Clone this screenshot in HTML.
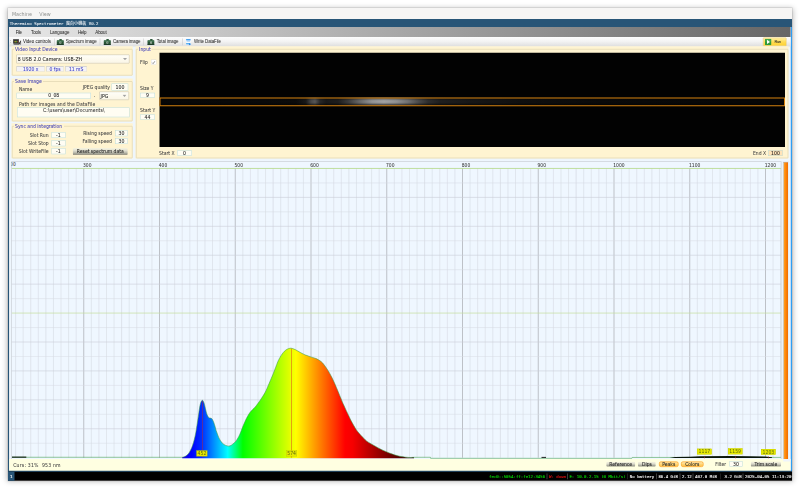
<!DOCTYPE html>
<html><head><meta charset="utf-8"><title>Theremino Spectrometer</title>
<style>
html,body{margin:0;padding:0;background:#fff;overflow:hidden;}
body{width:800px;height:489px;position:relative;overflow:hidden;}
body div,body svg.a{position:absolute;}
#root,#txt{left:0;top:0;width:3200px;height:1956px;transform:scale(0.25);transform-origin:0 0;overflow:hidden;}
#txt{will-change:opacity;}
.t{white-space:nowrap;line-height:1;-webkit-text-stroke:0.22px currentColor;}
.mono{-webkit-text-stroke:0.5px currentColor;}
.gtk{-webkit-text-stroke:0;}
.ui{font-family:"DejaVu Sans","Liberation Sans",sans-serif;}
.lib{font-family:"Liberation Sans","DejaVu Sans",sans-serif;-webkit-text-stroke:0.1px currentColor;}
.gtk{font-family:"DejaVu Sans","Liberation Sans",sans-serif;}
.mono{font-family:"DejaVu Sans Mono","Liberation Mono","Noto Sans CJK TC",monospace;}
.win{box-shadow:0 0 0 2.4px rgba(0,0,0,0.13),0 3px 22px 3px rgba(0,0,0,0.27);background:#f6f5f4;}
</style></head><body>
<div id="root">
<div class="win" style="left:32px;top:31.8px;width:3136px;height:1891.6px"></div>
<div style="left:32px;top:31.8px;width:3136px;height:44.2px;background:#f6f5f4;"></div>
<div style="left:32px;top:76px;width:3136px;height:32.4px;background:#285577;"></div>
<div style="left:32px;top:108.4px;width:5.2px;height:1776.4px;background:#285577;"></div>
<div style="left:3162.4px;top:108.4px;width:5.6px;height:1776.4px;background:#2e9ef4;"></div>
<div style="left:37.2px;top:108.4px;width:3125.2px;height:1776.4px;background:#eef6fd;"></div>
<div style="left:37.2px;top:108.4px;width:3125.2px;height:39.6px;background:linear-gradient(90deg,#e8e8e8 0%,#666666 100%);"></div>
<div style="left:37.2px;top:148px;width:3125.2px;height:38px;background:linear-gradient(180deg,#fdfdfd 0%,#f4f4f4 45%,#dedede 100%);"></div>
<svg class="a" style="left:51.6px;top:156px" width="33.6" height="23.6" viewBox="0 0 8.4 5.9"><rect x="0.2" y="0.3" width="5.6" height="4.3" fill="#262626"/><path d="M0.2 0.3 H5.8 V1.2 H0.2 Z" fill="#5a5a5a"/><rect x="1.5" y="1.9" width="1.3" height="1.5" fill="#b8a832"/><rect x="2.9" y="1.9" width="1.2" height="1.5" fill="#4c9a3c"/><rect x="4.2" y="1.9" width="0.9" height="1.5" fill="#a03a2a"/><path d="M5.2 5.0 L8.2 1.0 L8.2 5.4 Z" fill="#2e2e2e"/><path d="M6.6 4.9 L7.8 2.6 L7.8 4.9 Z" fill="#9a9a9a"/><rect x="0.6" y="4.7" width="5.6" height="0.9" fill="#3a3a3a"/></svg>
<div style="left:216px;top:154.4px;width:2px;height:26.4px;background:#c4c4c4;"></div>
<svg class="a" style="left:226.4px;top:156px" width="29.6" height="24" viewBox="0 0 7.4 6"><rect x="2.9" y="0.1" width="2.4" height="1.8" rx="0.3" fill="#2f5a3c"/><rect x="0.1" y="1.3" width="7.2" height="4.6" rx="0.6" fill="#2a5236"/><rect x="0.5" y="1.6" width="6.4" height="1.0" fill="#4d8a5f" opacity="0.85"/><rect x="2.9" y="2.6" width="1.9" height="1.9" fill="#c4d0c6"/><rect x="3.4" y="3.1" width="0.9" height="0.9" fill="#4a6a52"/><rect x="0.1" y="5.1" width="7.2" height="0.8" fill="#1c3826"/></svg>
<div style="left:399.2px;top:154.4px;width:2px;height:26.4px;background:#c4c4c4;"></div>
<svg class="a" style="left:414.4px;top:156px" width="29.6" height="24" viewBox="0 0 7.4 6"><rect x="2.9" y="0.1" width="2.4" height="1.8" rx="0.3" fill="#2f5a3c"/><rect x="0.1" y="1.3" width="7.2" height="4.6" rx="0.6" fill="#2a5236"/><rect x="0.5" y="1.6" width="6.4" height="1.0" fill="#4d8a5f" opacity="0.85"/><rect x="2.9" y="2.6" width="1.9" height="1.9" fill="#c4d0c6"/><rect x="3.4" y="3.1" width="0.9" height="0.9" fill="#4a6a52"/><rect x="0.1" y="5.1" width="7.2" height="0.8" fill="#1c3826"/></svg>
<div style="left:574.4px;top:154.4px;width:2px;height:26.4px;background:#c4c4c4;"></div>
<svg class="a" style="left:588.8px;top:156px" width="29.6" height="24" viewBox="0 0 7.4 6"><rect x="2.9" y="0.1" width="2.4" height="1.8" rx="0.3" fill="#2f5a3c"/><rect x="0.1" y="1.3" width="7.2" height="4.6" rx="0.6" fill="#2a5236"/><rect x="0.5" y="1.6" width="6.4" height="1.0" fill="#4d8a5f" opacity="0.85"/><rect x="2.9" y="2.6" width="1.9" height="1.9" fill="#c4d0c6"/><rect x="3.4" y="3.1" width="0.9" height="0.9" fill="#4a6a52"/><rect x="0.1" y="5.1" width="7.2" height="0.8" fill="#1c3826"/></svg>
<div style="left:730.4px;top:154.4px;width:2px;height:26.4px;background:#c4c4c4;"></div>
<svg class="a" style="left:743.2px;top:153.6px" width="23.2" height="28.8" viewBox="0 0 5.8 7.2"><rect x="0.6" y="0.9" width="4.2" height="5.6" fill="#f4f9ff"/><rect x="0.2" y="0.4" width="4.8" height="1.5" rx="0.7" fill="#4aa2ee"/><rect x="0.9" y="2.6" width="3.4" height="0.7" fill="#a8d2f6"/><rect x="0.2" y="4.4" width="4.0" height="1.6" rx="0.7" fill="#5ab0f2"/><path d="M3.2 4.6 L5.6 5.6 L3.2 6.9 Z" fill="#2a86e0"/></svg>
<div style="left:42.4px;top:155.2px;width:2px;height:24.8px;background:repeating-linear-gradient(180deg,#aaa 0 2.4px,transparent 2.4px 6.4px);"></div>
<div style="left:3052px;top:150px;width:93.6px;height:35.2px;background:linear-gradient(180deg,#fff0a8 0%,#ffdc55 50%,#ffd232 100%);border:2px solid #e8c24a;box-sizing:border-box;border-radius:3.2px;"></div>
<svg class="a" style="left:3060px;top:155.2px" width="25.6" height="25.6" viewBox="0 0 6.4 6.4"><rect x="0" y="0" width="6.4" height="6.4" rx="0.7" fill="#2f9a3a"/><rect x="0.5" y="0.5" width="5.4" height="2.4" fill="#57b860" opacity="0.6"/><path d="M2 1.1 L5 3.2 L2 5.3 Z" fill="#fff"/></svg>
<div style="left:45.6px;top:185.2px;width:485.6px;height:117.6px;background:#fff4d1;"></div>
<div style="left:47.6px;top:196px;width:482.4px;height:105.6px;border:2.2px solid #d2c8a2;box-sizing:border-box;border-radius:2.8px"></div>
<div style="left:56.4px;top:189.2px;width:180.4px;height:14.4px;background:#fff4d1;"></div>
<div style="left:45.6px;top:314px;width:485.6px;height:172.4px;background:#fff4d1;"></div>
<div style="left:47.6px;top:324.8px;width:482.4px;height:160.4px;border:2.2px solid #d2c8a2;box-sizing:border-box;border-radius:2.8px"></div>
<div style="left:56.4px;top:318px;width:116px;height:14.4px;background:#fff4d1;"></div>
<div style="left:45.6px;top:493.2px;width:485.6px;height:141.2px;background:#fff4d1;"></div>
<div style="left:47.6px;top:504px;width:482.4px;height:129.2px;border:2.2px solid #d2c8a2;box-sizing:border-box;border-radius:2.8px"></div>
<div style="left:56.4px;top:497.2px;width:200px;height:14.4px;background:#fff4d1;"></div>
<div style="left:542px;top:185.2px;width:2612.4px;height:449.2px;background:#fff4d1;"></div>
<div style="left:544px;top:196px;width:2609.2px;height:437.2px;border:2.2px solid #d2c8a2;box-sizing:border-box;border-radius:2.8px"></div>
<div style="left:552.4px;top:189.2px;width:53.6px;height:14.4px;background:#fff4d1;"></div>
<div style="left:65.2px;top:218.4px;width:453.2px;height:35.2px;background:linear-gradient(180deg,#fffef8,#fbf6e6);border:2px solid #c2bfb2;box-sizing:border-box;border-radius:2.4px;"></div>
<svg class="a" style="left:492px;top:231.2px" width="16" height="9.6" viewBox="0 0 4 2.4"><path d="M0 0.2 L4 0.2 L2 2.4 Z" fill="#a2a2a2"/></svg>
<div style="left:66.4px;top:264px;width:112.8px;height:22.4px;background:#f4f3f6;border:2px solid #e6e0cc;border-top-color:#b9b6ae;border-left-color:#c9c6be;box-sizing:border-box;"></div>
<div style="left:185.2px;top:264px;width:70px;height:22.4px;background:#f4f3f6;border:2px solid #e6e0cc;border-top-color:#b9b6ae;border-left-color:#c9c6be;box-sizing:border-box;"></div>
<div style="left:261.2px;top:264px;width:86.8px;height:22.4px;background:#f4f3f6;border:2px solid #e6e0cc;border-top-color:#b9b6ae;border-left-color:#c9c6be;box-sizing:border-box;"></div>
<div style="left:446.4px;top:333.6px;width:66.8px;height:28.8px;background:#fffdf3;border:2px solid #bddcd6;box-sizing:border-box;"></div>
<div style="left:66px;top:370.8px;width:298px;height:24px;background:#fffdf3;border:2px solid #bddcd6;box-sizing:border-box;"></div>
<div style="left:396.8px;top:366px;width:119.2px;height:34px;background:linear-gradient(180deg,#fffef8,#fbf6e6);border:2px solid #c2bfb2;box-sizing:border-box;border-radius:2.4px;"></div>
<svg class="a" style="left:489.6px;top:378.2px" width="16" height="9.6" viewBox="0 0 4 2.4"><path d="M0 0.2 L4 0.2 L2 2.4 Z" fill="#a2a2a2"/></svg>
<div style="left:68.4px;top:430.4px;width:449.6px;height:38.8px;background:#fffdf3;border:2px solid #bddcd6;box-sizing:border-box;"></div>
<div style="left:205.6px;top:527.8px;width:56px;height:23.8px;background:#fffdf3;border:2px solid #bddcd6;box-sizing:border-box;"></div>
<div style="left:205.6px;top:561.4px;width:56px;height:23.8px;background:#fffdf3;border:2px solid #bddcd6;box-sizing:border-box;"></div>
<div style="left:205.6px;top:593.4px;width:56px;height:23.8px;background:#fffdf3;border:2px solid #bddcd6;box-sizing:border-box;"></div>
<div style="left:460.8px;top:521.2px;width:50px;height:23.6px;background:#fffdf3;border:2px solid #bddcd6;box-sizing:border-box;"></div>
<div style="left:460.8px;top:552.8px;width:50px;height:23.6px;background:#fffdf3;border:2px solid #bddcd6;box-sizing:border-box;"></div>
<div style="left:291.2px;top:592.4px;width:220px;height:27.2px;background:linear-gradient(180deg,#f6f4e0 0%,#e0dfd0 40%,#b4b4a6 78%,#85857a 100%);border-radius:5.2px;border-bottom:2px solid #6f6f66;box-sizing:border-box;"></div>
<div style="left:603.6px;top:239px;width:21.2px;height:20.2px;background:#ffffff;border:1.8px solid #c4c4c4;box-sizing:border-box;"></div>
<svg class="a" style="left:606.4px;top:241.6px" width="16" height="16" viewBox="0 0 4 4"><path d="M0.6 2.1 L1.6 3.1 L3.5 0.7" fill="none" stroke="#4a4a4a" stroke-width="0.6"/></svg>
<div style="left:560.4px;top:370.8px;width:59.2px;height:18.8px;background:#fffdf3;border:2px solid #bddcd6;box-sizing:border-box;"></div>
<div style="left:560.4px;top:458px;width:59.2px;height:20px;background:#fffdf3;border:2px solid #bddcd6;box-sizing:border-box;"></div>
<div style="left:708.4px;top:602px;width:59.2px;height:21.2px;background:#fffdf3;border:2px solid #bddcd6;box-sizing:border-box;"></div>
<div style="left:3073.2px;top:600.4px;width:57.6px;height:24px;background:#ffe3b8;border:2px solid #bddcd6;box-sizing:border-box;"></div>
<div style="left:638px;top:211px;width:2502.4px;height:376.6px;background:#020202;overflow:hidden;"><div style="left:0;top:179.4px;width:2502.4px;height:31.2px;background:linear-gradient(180deg,rgba(0,0,0,0.75) 0%,rgba(0,0,0,0.12) 30%,rgba(0,0,0,0) 50%,rgba(0,0,0,0.12) 70%,rgba(0,0,0,0.75) 100%),linear-gradient(90deg,#070707 0.00%,#0b0b0b 21.82%,#1a1a1a 23.42%,#4a4a4a 24.22%,#5a5a5a 24.86%,#2a2a2a 25.66%,#1a1a1a 26.61%,#1e1e1e 28.53%,#3c3c3c 30.13%,#6e6e6e 32.05%,#999a9b 33.97%,#a8a9aa 35.89%,#98999a 37.80%,#777 39.72%,#505050 41.32%,#303030 42.92%,#202020 44.84%,#181818 49.63%,#101010 57.62%,#0a0a0a 70.41%,#060606 99.98%)"></div></div>
<div style="left:638px;top:389.6px;width:2502.4px;height:35px;border:4.2px solid #d5820f;box-sizing:border-box;"></div>
<svg class="a" style="left:0;top:0" width="3200" height="1956" viewBox="0 0 800 489"><defs><linearGradient id="sp" gradientUnits="userSpaceOnUse" x1="0" y1="0" x2="800" y2="0"><stop offset="0.19937" stop-color="#1a0060"/><stop offset="0.21831" stop-color="#2a00a8"/><stop offset="0.23346" stop-color="#0a00f0"/><stop offset="0.23914" stop-color="#0000ff"/><stop offset="0.25240" stop-color="#0030ff"/><stop offset="0.28459" stop-color="#00ffff"/><stop offset="0.30353" stop-color="#00ff00"/><stop offset="0.33667" stop-color="#80ff00"/><stop offset="0.36981" stop-color="#ffff00"/><stop offset="0.40011" stop-color="#ff8000"/><stop offset="0.43136" stop-color="#ff0000"/><stop offset="0.44083" stop-color="#f60000"/><stop offset="0.48344" stop-color="#7c0000"/><stop offset="0.51184" stop-color="#340000"/><stop offset="0.53078" stop-color="#080000"/></linearGradient><clipPath id="cc"><rect x="11.5" y="161.0" width="769.7" height="298.1"/></clipPath></defs><rect x="11.5" y="161.0" width="769.7" height="298.1" fill="#eff7ff"/><g clip-path="url(#cc)"><line x1="15.58" y1="168.45" x2="15.58" y2="457.7" stroke="#d0d5dd" stroke-width="0.5"/><line x1="23.15" y1="168.45" x2="23.15" y2="457.7" stroke="#d0d5dd" stroke-width="0.5"/><line x1="30.72" y1="168.45" x2="30.72" y2="457.7" stroke="#d0d5dd" stroke-width="0.5"/><line x1="38.30" y1="168.45" x2="38.30" y2="457.7" stroke="#d0d5dd" stroke-width="0.5"/><line x1="45.88" y1="168.45" x2="45.88" y2="457.7" stroke="#cdd2da" stroke-width="0.55"/><line x1="53.45" y1="168.45" x2="53.45" y2="457.7" stroke="#d0d5dd" stroke-width="0.5"/><line x1="61.03" y1="168.45" x2="61.03" y2="457.7" stroke="#d0d5dd" stroke-width="0.5"/><line x1="68.60" y1="168.45" x2="68.60" y2="457.7" stroke="#d0d5dd" stroke-width="0.5"/><line x1="76.18" y1="168.45" x2="76.18" y2="457.7" stroke="#d0d5dd" stroke-width="0.5"/><line x1="83.75" y1="168.45" x2="83.75" y2="457.7" stroke="#8e8e92" stroke-width="0.52"/><line x1="91.33" y1="168.45" x2="91.33" y2="457.7" stroke="#d0d5dd" stroke-width="0.5"/><line x1="98.90" y1="168.45" x2="98.90" y2="457.7" stroke="#d0d5dd" stroke-width="0.5"/><line x1="106.47" y1="168.45" x2="106.47" y2="457.7" stroke="#d0d5dd" stroke-width="0.5"/><line x1="114.05" y1="168.45" x2="114.05" y2="457.7" stroke="#d0d5dd" stroke-width="0.5"/><line x1="121.62" y1="168.45" x2="121.62" y2="457.7" stroke="#cdd2da" stroke-width="0.55"/><line x1="129.20" y1="168.45" x2="129.20" y2="457.7" stroke="#d0d5dd" stroke-width="0.5"/><line x1="136.78" y1="168.45" x2="136.78" y2="457.7" stroke="#d0d5dd" stroke-width="0.5"/><line x1="144.35" y1="168.45" x2="144.35" y2="457.7" stroke="#d0d5dd" stroke-width="0.5"/><line x1="151.93" y1="168.45" x2="151.93" y2="457.7" stroke="#d0d5dd" stroke-width="0.5"/><line x1="159.50" y1="168.45" x2="159.50" y2="457.7" stroke="#8e8e92" stroke-width="0.52"/><line x1="167.07" y1="168.45" x2="167.07" y2="457.7" stroke="#d0d5dd" stroke-width="0.5"/><line x1="174.65" y1="168.45" x2="174.65" y2="457.7" stroke="#d0d5dd" stroke-width="0.5"/><line x1="182.22" y1="168.45" x2="182.22" y2="457.7" stroke="#d0d5dd" stroke-width="0.5"/><line x1="189.80" y1="168.45" x2="189.80" y2="457.7" stroke="#d0d5dd" stroke-width="0.5"/><line x1="197.38" y1="168.45" x2="197.38" y2="457.7" stroke="#cdd2da" stroke-width="0.55"/><line x1="204.95" y1="168.45" x2="204.95" y2="457.7" stroke="#d0d5dd" stroke-width="0.5"/><line x1="212.53" y1="168.45" x2="212.53" y2="457.7" stroke="#d0d5dd" stroke-width="0.5"/><line x1="220.10" y1="168.45" x2="220.10" y2="457.7" stroke="#d0d5dd" stroke-width="0.5"/><line x1="227.68" y1="168.45" x2="227.68" y2="457.7" stroke="#d0d5dd" stroke-width="0.5"/><line x1="235.25" y1="168.45" x2="235.25" y2="457.7" stroke="#8e8e92" stroke-width="0.52"/><line x1="242.82" y1="168.45" x2="242.82" y2="457.7" stroke="#d0d5dd" stroke-width="0.5"/><line x1="250.40" y1="168.45" x2="250.40" y2="457.7" stroke="#d0d5dd" stroke-width="0.5"/><line x1="257.98" y1="168.45" x2="257.98" y2="457.7" stroke="#d0d5dd" stroke-width="0.5"/><line x1="265.55" y1="168.45" x2="265.55" y2="457.7" stroke="#d0d5dd" stroke-width="0.5"/><line x1="273.12" y1="168.45" x2="273.12" y2="457.7" stroke="#cdd2da" stroke-width="0.55"/><line x1="280.70" y1="168.45" x2="280.70" y2="457.7" stroke="#d0d5dd" stroke-width="0.5"/><line x1="288.27" y1="168.45" x2="288.27" y2="457.7" stroke="#d0d5dd" stroke-width="0.5"/><line x1="295.85" y1="168.45" x2="295.85" y2="457.7" stroke="#d0d5dd" stroke-width="0.5"/><line x1="303.42" y1="168.45" x2="303.42" y2="457.7" stroke="#d0d5dd" stroke-width="0.5"/><line x1="311.00" y1="168.45" x2="311.00" y2="457.7" stroke="#8e8e92" stroke-width="0.52"/><line x1="318.57" y1="168.45" x2="318.57" y2="457.7" stroke="#d0d5dd" stroke-width="0.5"/><line x1="326.15" y1="168.45" x2="326.15" y2="457.7" stroke="#d0d5dd" stroke-width="0.5"/><line x1="333.73" y1="168.45" x2="333.73" y2="457.7" stroke="#d0d5dd" stroke-width="0.5"/><line x1="341.30" y1="168.45" x2="341.30" y2="457.7" stroke="#d0d5dd" stroke-width="0.5"/><line x1="348.88" y1="168.45" x2="348.88" y2="457.7" stroke="#cdd2da" stroke-width="0.55"/><line x1="356.45" y1="168.45" x2="356.45" y2="457.7" stroke="#d0d5dd" stroke-width="0.5"/><line x1="364.02" y1="168.45" x2="364.02" y2="457.7" stroke="#d0d5dd" stroke-width="0.5"/><line x1="371.60" y1="168.45" x2="371.60" y2="457.7" stroke="#d0d5dd" stroke-width="0.5"/><line x1="379.17" y1="168.45" x2="379.17" y2="457.7" stroke="#d0d5dd" stroke-width="0.5"/><line x1="386.75" y1="168.45" x2="386.75" y2="457.7" stroke="#8e8e92" stroke-width="0.52"/><line x1="394.32" y1="168.45" x2="394.32" y2="457.7" stroke="#d0d5dd" stroke-width="0.5"/><line x1="401.90" y1="168.45" x2="401.90" y2="457.7" stroke="#d0d5dd" stroke-width="0.5"/><line x1="409.48" y1="168.45" x2="409.48" y2="457.7" stroke="#d0d5dd" stroke-width="0.5"/><line x1="417.05" y1="168.45" x2="417.05" y2="457.7" stroke="#d0d5dd" stroke-width="0.5"/><line x1="424.62" y1="168.45" x2="424.62" y2="457.7" stroke="#cdd2da" stroke-width="0.55"/><line x1="432.20" y1="168.45" x2="432.20" y2="457.7" stroke="#d0d5dd" stroke-width="0.5"/><line x1="439.77" y1="168.45" x2="439.77" y2="457.7" stroke="#d0d5dd" stroke-width="0.5"/><line x1="447.35" y1="168.45" x2="447.35" y2="457.7" stroke="#d0d5dd" stroke-width="0.5"/><line x1="454.92" y1="168.45" x2="454.92" y2="457.7" stroke="#d0d5dd" stroke-width="0.5"/><line x1="462.50" y1="168.45" x2="462.50" y2="457.7" stroke="#8e8e92" stroke-width="0.52"/><line x1="470.07" y1="168.45" x2="470.07" y2="457.7" stroke="#d0d5dd" stroke-width="0.5"/><line x1="477.65" y1="168.45" x2="477.65" y2="457.7" stroke="#d0d5dd" stroke-width="0.5"/><line x1="485.22" y1="168.45" x2="485.22" y2="457.7" stroke="#d0d5dd" stroke-width="0.5"/><line x1="492.80" y1="168.45" x2="492.80" y2="457.7" stroke="#d0d5dd" stroke-width="0.5"/><line x1="500.38" y1="168.45" x2="500.38" y2="457.7" stroke="#cdd2da" stroke-width="0.55"/><line x1="507.95" y1="168.45" x2="507.95" y2="457.7" stroke="#d0d5dd" stroke-width="0.5"/><line x1="515.52" y1="168.45" x2="515.52" y2="457.7" stroke="#d0d5dd" stroke-width="0.5"/><line x1="523.10" y1="168.45" x2="523.10" y2="457.7" stroke="#d0d5dd" stroke-width="0.5"/><line x1="530.67" y1="168.45" x2="530.67" y2="457.7" stroke="#d0d5dd" stroke-width="0.5"/><line x1="538.25" y1="168.45" x2="538.25" y2="457.7" stroke="#8e8e92" stroke-width="0.52"/><line x1="545.83" y1="168.45" x2="545.83" y2="457.7" stroke="#d0d5dd" stroke-width="0.5"/><line x1="553.40" y1="168.45" x2="553.40" y2="457.7" stroke="#d0d5dd" stroke-width="0.5"/><line x1="560.97" y1="168.45" x2="560.97" y2="457.7" stroke="#d0d5dd" stroke-width="0.5"/><line x1="568.55" y1="168.45" x2="568.55" y2="457.7" stroke="#d0d5dd" stroke-width="0.5"/><line x1="576.12" y1="168.45" x2="576.12" y2="457.7" stroke="#cdd2da" stroke-width="0.55"/><line x1="583.70" y1="168.45" x2="583.70" y2="457.7" stroke="#d0d5dd" stroke-width="0.5"/><line x1="591.27" y1="168.45" x2="591.27" y2="457.7" stroke="#d0d5dd" stroke-width="0.5"/><line x1="598.85" y1="168.45" x2="598.85" y2="457.7" stroke="#d0d5dd" stroke-width="0.5"/><line x1="606.42" y1="168.45" x2="606.42" y2="457.7" stroke="#d0d5dd" stroke-width="0.5"/><line x1="614.00" y1="168.45" x2="614.00" y2="457.7" stroke="#8e8e92" stroke-width="0.52"/><line x1="621.58" y1="168.45" x2="621.58" y2="457.7" stroke="#d0d5dd" stroke-width="0.5"/><line x1="629.15" y1="168.45" x2="629.15" y2="457.7" stroke="#d0d5dd" stroke-width="0.5"/><line x1="636.72" y1="168.45" x2="636.72" y2="457.7" stroke="#d0d5dd" stroke-width="0.5"/><line x1="644.30" y1="168.45" x2="644.30" y2="457.7" stroke="#d0d5dd" stroke-width="0.5"/><line x1="651.88" y1="168.45" x2="651.88" y2="457.7" stroke="#cdd2da" stroke-width="0.55"/><line x1="659.45" y1="168.45" x2="659.45" y2="457.7" stroke="#d0d5dd" stroke-width="0.5"/><line x1="667.02" y1="168.45" x2="667.02" y2="457.7" stroke="#d0d5dd" stroke-width="0.5"/><line x1="674.60" y1="168.45" x2="674.60" y2="457.7" stroke="#d0d5dd" stroke-width="0.5"/><line x1="682.17" y1="168.45" x2="682.17" y2="457.7" stroke="#d0d5dd" stroke-width="0.5"/><line x1="689.75" y1="168.45" x2="689.75" y2="457.7" stroke="#8e8e92" stroke-width="0.52"/><line x1="697.32" y1="168.45" x2="697.32" y2="457.7" stroke="#d0d5dd" stroke-width="0.5"/><line x1="704.90" y1="168.45" x2="704.90" y2="457.7" stroke="#d0d5dd" stroke-width="0.5"/><line x1="712.47" y1="168.45" x2="712.47" y2="457.7" stroke="#d0d5dd" stroke-width="0.5"/><line x1="720.05" y1="168.45" x2="720.05" y2="457.7" stroke="#d0d5dd" stroke-width="0.5"/><line x1="727.62" y1="168.45" x2="727.62" y2="457.7" stroke="#cdd2da" stroke-width="0.55"/><line x1="735.20" y1="168.45" x2="735.20" y2="457.7" stroke="#d0d5dd" stroke-width="0.5"/><line x1="742.77" y1="168.45" x2="742.77" y2="457.7" stroke="#d0d5dd" stroke-width="0.5"/><line x1="750.35" y1="168.45" x2="750.35" y2="457.7" stroke="#d0d5dd" stroke-width="0.5"/><line x1="757.92" y1="168.45" x2="757.92" y2="457.7" stroke="#d0d5dd" stroke-width="0.5"/><line x1="765.50" y1="168.45" x2="765.50" y2="457.7" stroke="#8e8e92" stroke-width="0.52"/><line x1="773.07" y1="168.45" x2="773.07" y2="457.7" stroke="#d0d5dd" stroke-width="0.5"/><line x1="780.65" y1="168.45" x2="780.65" y2="457.7" stroke="#d0d5dd" stroke-width="0.5"/><line x1="11.5" y1="182.91" x2="781.2" y2="182.91" stroke="#d6dbe2" stroke-width="0.5"/><line x1="11.5" y1="197.38" x2="781.2" y2="197.38" stroke="#c9cdd6" stroke-width="0.6"/><line x1="11.5" y1="211.84" x2="781.2" y2="211.84" stroke="#d6dbe2" stroke-width="0.5"/><line x1="11.5" y1="226.30" x2="781.2" y2="226.30" stroke="#c9cdd6" stroke-width="0.6"/><line x1="11.5" y1="240.76" x2="781.2" y2="240.76" stroke="#d6dbe2" stroke-width="0.5"/><line x1="11.5" y1="255.22" x2="781.2" y2="255.22" stroke="#c9cdd6" stroke-width="0.6"/><line x1="11.5" y1="269.69" x2="781.2" y2="269.69" stroke="#d6dbe2" stroke-width="0.5"/><line x1="11.5" y1="284.15" x2="781.2" y2="284.15" stroke="#c9cdd6" stroke-width="0.6"/><line x1="11.5" y1="298.61" x2="781.2" y2="298.61" stroke="#d6dbe2" stroke-width="0.5"/><line x1="11.5" y1="313.07" x2="781.2" y2="313.07" stroke="#c3dd9c" stroke-width="0.7"/><line x1="11.5" y1="327.54" x2="781.2" y2="327.54" stroke="#d6dbe2" stroke-width="0.5"/><line x1="11.5" y1="342.00" x2="781.2" y2="342.00" stroke="#c9cdd6" stroke-width="0.6"/><line x1="11.5" y1="356.46" x2="781.2" y2="356.46" stroke="#d6dbe2" stroke-width="0.5"/><line x1="11.5" y1="370.92" x2="781.2" y2="370.92" stroke="#c9cdd6" stroke-width="0.6"/><line x1="11.5" y1="385.39" x2="781.2" y2="385.39" stroke="#d6dbe2" stroke-width="0.5"/><line x1="11.5" y1="399.85" x2="781.2" y2="399.85" stroke="#c9cdd6" stroke-width="0.6"/><line x1="11.5" y1="414.31" x2="781.2" y2="414.31" stroke="#d6dbe2" stroke-width="0.5"/><line x1="11.5" y1="428.77" x2="781.2" y2="428.77" stroke="#c9cdd6" stroke-width="0.6"/><line x1="11.5" y1="443.24" x2="781.2" y2="443.24" stroke="#d6dbe2" stroke-width="0.5"/><line x1="11.5" y1="168.45" x2="781.2" y2="168.45" stroke="#b4d987" stroke-width="0.8"/><path d="M182.2 458.3 L182.2 457.3 C182.6 457.2 183.9 457.0 184.8 456.6 C185.7 456.2 186.6 455.6 187.4 454.8 C188.2 454.0 188.9 453.2 189.6 452.0 C190.3 450.8 191.0 449.4 191.7 447.8 C192.3 446.2 192.9 444.5 193.5 442.5 C194.1 440.5 194.7 438.0 195.2 435.7 C195.7 433.4 196.1 431.1 196.5 428.5 C196.9 425.9 197.4 422.7 197.8 420.0 C198.2 417.3 198.6 414.8 198.9 412.5 C199.2 410.2 199.6 407.9 199.9 406.1 C200.2 404.4 200.6 403.0 201.0 402.0 C201.4 401.0 201.9 400.4 202.3 400.3 C202.7 400.2 203.1 400.9 203.4 401.6 C203.8 402.3 204.1 403.2 204.4 404.3 C204.7 405.4 205.1 407.1 205.4 408.5 C205.8 409.9 206.1 411.8 206.5 413.0 C206.9 414.2 207.3 415.2 207.7 416.0 C208.1 416.8 208.6 417.5 209.1 417.9 C209.6 418.2 210.0 418.0 210.4 418.1 C210.8 418.2 211.3 418.2 211.7 418.6 C212.1 419.0 212.5 419.5 212.8 420.2 C213.2 420.9 213.4 421.6 213.8 422.6 C214.2 423.6 214.6 425.0 215.0 426.3 C215.4 427.6 215.7 429.1 216.1 430.4 C216.5 431.7 217.0 432.8 217.4 434.0 C217.8 435.2 218.2 436.3 218.7 437.4 C219.2 438.5 219.8 439.6 220.4 440.5 C221.0 441.4 221.6 442.4 222.2 443.0 C222.8 443.6 223.3 444.0 223.9 444.4 C224.5 444.8 225.1 445.1 225.7 445.4 C226.3 445.6 226.8 445.8 227.4 445.9 C228.0 446.0 228.5 446.2 229.1 446.1 C229.7 446.0 230.3 445.8 230.9 445.5 C231.5 445.2 232.0 444.8 232.6 444.3 C233.2 443.9 233.8 443.4 234.4 442.8 C235.0 442.2 235.5 441.7 236.1 440.9 C236.7 440.1 237.3 439.1 237.9 438.1 C238.5 437.1 239.0 436.1 239.6 434.8 C240.2 433.6 240.7 432.1 241.3 430.6 C241.9 429.2 242.4 427.5 243.0 426.1 C243.6 424.7 244.2 423.3 244.8 422.0 C245.4 420.7 245.9 419.4 246.5 418.3 C247.1 417.2 247.6 416.2 248.2 415.2 C248.8 414.2 249.3 413.3 250.0 412.4 C250.7 411.5 251.7 410.5 252.6 409.6 C253.5 408.7 254.3 408.0 255.2 407.0 C256.1 406.0 256.9 404.8 257.8 403.6 C258.7 402.4 259.6 401.2 260.4 400.0 C261.2 398.8 261.9 397.8 262.6 396.6 C263.3 395.4 264.1 394.4 264.8 393.0 C265.5 391.6 266.3 390.0 267.0 388.4 C267.7 386.8 268.4 385.2 269.1 383.5 C269.8 381.8 270.6 380.1 271.3 378.3 C272.0 376.6 272.8 374.8 273.5 373.0 C274.2 371.2 275.0 369.2 275.7 367.3 C276.4 365.4 277.1 363.4 277.8 361.7 C278.5 360.0 279.3 358.7 280.0 357.4 C280.7 356.1 281.5 354.9 282.2 353.9 C282.9 352.9 283.7 352.0 284.4 351.3 C285.1 350.6 285.8 350.1 286.5 349.6 C287.2 349.2 288.0 348.8 288.7 348.6 C289.4 348.4 290.2 348.2 290.9 348.2 C291.6 348.2 292.3 348.5 293.0 348.7 C293.7 348.9 294.4 349.2 295.2 349.6 C296.0 350.0 296.9 350.5 297.8 351.0 C298.7 351.5 299.5 352.0 300.4 352.5 C301.3 353.0 302.1 353.5 303.0 353.9 C303.9 354.3 304.8 354.8 305.7 355.1 C306.6 355.5 307.4 355.7 308.3 356.0 C309.2 356.3 310.0 356.6 310.9 356.9 C311.8 357.2 312.6 357.4 313.5 357.7 C314.4 358.0 315.2 358.2 316.1 358.6 C317.0 359.0 317.8 359.4 318.7 359.9 C319.6 360.4 320.5 361.0 321.3 361.7 C322.1 362.4 322.8 363.1 323.5 364.0 C324.2 364.9 325.0 366.0 325.7 367.0 C326.4 368.0 327.1 369.1 327.8 370.2 C328.5 371.3 329.3 372.6 330.0 373.9 C330.7 375.2 331.5 376.7 332.2 378.1 C332.9 379.6 333.6 381.0 334.3 382.6 C335.0 384.2 335.8 386.0 336.5 387.7 C337.2 389.4 338.0 391.2 338.7 393.0 C339.4 394.8 340.2 396.6 340.9 398.3 C341.6 400.1 342.3 401.9 343.0 403.5 C343.7 405.1 344.5 406.6 345.2 408.2 C345.9 409.8 346.7 411.5 347.4 412.9 C348.1 414.3 348.6 415.5 349.2 416.7 C349.8 417.9 350.2 418.9 350.9 420.3 C351.6 421.7 352.6 423.6 353.5 425.1 C354.4 426.6 355.2 428.1 356.1 429.4 C357.0 430.7 357.8 431.8 358.7 432.8 C359.6 433.9 360.4 434.8 361.3 435.7 C362.2 436.6 363.0 437.5 363.9 438.4 C364.8 439.3 365.5 440.1 366.5 440.9 C367.5 441.7 368.8 442.5 370.0 443.2 C371.2 443.9 372.3 444.5 373.5 445.2 C374.7 445.9 375.9 446.6 377.0 447.2 C378.1 447.8 379.2 448.4 380.4 449.0 C381.5 449.6 382.7 450.2 383.9 450.7 C385.1 451.2 386.2 451.7 387.4 452.2 C388.6 452.7 389.8 453.2 390.9 453.6 C392.0 454.0 393.1 454.4 394.3 454.8 C395.5 455.2 396.6 455.5 397.8 455.8 C399.0 456.1 400.0 456.3 401.3 456.5 C402.6 456.7 404.2 457.0 405.7 457.2 C407.1 457.4 408.6 457.5 410.0 457.5 C411.4 457.5 413.3 457.3 414.0 457.3 L414 458.3 Z" fill="url(#sp)"/><path d="M11.5 457.25 L182.2 457.3 182.2 457.3 C182.6 457.2 183.9 457.0 184.8 456.6 C185.7 456.2 186.6 455.6 187.4 454.8 C188.2 454.0 188.9 453.2 189.6 452.0 C190.3 450.8 191.0 449.4 191.7 447.8 C192.3 446.2 192.9 444.5 193.5 442.5 C194.1 440.5 194.7 438.0 195.2 435.7 C195.7 433.4 196.1 431.1 196.5 428.5 C196.9 425.9 197.4 422.7 197.8 420.0 C198.2 417.3 198.6 414.8 198.9 412.5 C199.2 410.2 199.6 407.9 199.9 406.1 C200.2 404.4 200.6 403.0 201.0 402.0 C201.4 401.0 201.9 400.4 202.3 400.3 C202.7 400.2 203.1 400.9 203.4 401.6 C203.8 402.3 204.1 403.2 204.4 404.3 C204.7 405.4 205.1 407.1 205.4 408.5 C205.8 409.9 206.1 411.8 206.5 413.0 C206.9 414.2 207.3 415.2 207.7 416.0 C208.1 416.8 208.6 417.5 209.1 417.9 C209.6 418.2 210.0 418.0 210.4 418.1 C210.8 418.2 211.3 418.2 211.7 418.6 C212.1 419.0 212.5 419.5 212.8 420.2 C213.2 420.9 213.4 421.6 213.8 422.6 C214.2 423.6 214.6 425.0 215.0 426.3 C215.4 427.6 215.7 429.1 216.1 430.4 C216.5 431.7 217.0 432.8 217.4 434.0 C217.8 435.2 218.2 436.3 218.7 437.4 C219.2 438.5 219.8 439.6 220.4 440.5 C221.0 441.4 221.6 442.4 222.2 443.0 C222.8 443.6 223.3 444.0 223.9 444.4 C224.5 444.8 225.1 445.1 225.7 445.4 C226.3 445.6 226.8 445.8 227.4 445.9 C228.0 446.0 228.5 446.2 229.1 446.1 C229.7 446.0 230.3 445.8 230.9 445.5 C231.5 445.2 232.0 444.8 232.6 444.3 C233.2 443.9 233.8 443.4 234.4 442.8 C235.0 442.2 235.5 441.7 236.1 440.9 C236.7 440.1 237.3 439.1 237.9 438.1 C238.5 437.1 239.0 436.1 239.6 434.8 C240.2 433.6 240.7 432.1 241.3 430.6 C241.9 429.2 242.4 427.5 243.0 426.1 C243.6 424.7 244.2 423.3 244.8 422.0 C245.4 420.7 245.9 419.4 246.5 418.3 C247.1 417.2 247.6 416.2 248.2 415.2 C248.8 414.2 249.3 413.3 250.0 412.4 C250.7 411.5 251.7 410.5 252.6 409.6 C253.5 408.7 254.3 408.0 255.2 407.0 C256.1 406.0 256.9 404.8 257.8 403.6 C258.7 402.4 259.6 401.2 260.4 400.0 C261.2 398.8 261.9 397.8 262.6 396.6 C263.3 395.4 264.1 394.4 264.8 393.0 C265.5 391.6 266.3 390.0 267.0 388.4 C267.7 386.8 268.4 385.2 269.1 383.5 C269.8 381.8 270.6 380.1 271.3 378.3 C272.0 376.6 272.8 374.8 273.5 373.0 C274.2 371.2 275.0 369.2 275.7 367.3 C276.4 365.4 277.1 363.4 277.8 361.7 C278.5 360.0 279.3 358.7 280.0 357.4 C280.7 356.1 281.5 354.9 282.2 353.9 C282.9 352.9 283.7 352.0 284.4 351.3 C285.1 350.6 285.8 350.1 286.5 349.6 C287.2 349.2 288.0 348.8 288.7 348.6 C289.4 348.4 290.2 348.2 290.9 348.2 C291.6 348.2 292.3 348.5 293.0 348.7 C293.7 348.9 294.4 349.2 295.2 349.6 C296.0 350.0 296.9 350.5 297.8 351.0 C298.7 351.5 299.5 352.0 300.4 352.5 C301.3 353.0 302.1 353.5 303.0 353.9 C303.9 354.3 304.8 354.8 305.7 355.1 C306.6 355.5 307.4 355.7 308.3 356.0 C309.2 356.3 310.0 356.6 310.9 356.9 C311.8 357.2 312.6 357.4 313.5 357.7 C314.4 358.0 315.2 358.2 316.1 358.6 C317.0 359.0 317.8 359.4 318.7 359.9 C319.6 360.4 320.5 361.0 321.3 361.7 C322.1 362.4 322.8 363.1 323.5 364.0 C324.2 364.9 325.0 366.0 325.7 367.0 C326.4 368.0 327.1 369.1 327.8 370.2 C328.5 371.3 329.3 372.6 330.0 373.9 C330.7 375.2 331.5 376.7 332.2 378.1 C332.9 379.6 333.6 381.0 334.3 382.6 C335.0 384.2 335.8 386.0 336.5 387.7 C337.2 389.4 338.0 391.2 338.7 393.0 C339.4 394.8 340.2 396.6 340.9 398.3 C341.6 400.1 342.3 401.9 343.0 403.5 C343.7 405.1 344.5 406.6 345.2 408.2 C345.9 409.8 346.7 411.5 347.4 412.9 C348.1 414.3 348.6 415.5 349.2 416.7 C349.8 417.9 350.2 418.9 350.9 420.3 C351.6 421.7 352.6 423.6 353.5 425.1 C354.4 426.6 355.2 428.1 356.1 429.4 C357.0 430.7 357.8 431.8 358.7 432.8 C359.6 433.9 360.4 434.8 361.3 435.7 C362.2 436.6 363.0 437.5 363.9 438.4 C364.8 439.3 365.5 440.1 366.5 440.9 C367.5 441.7 368.8 442.5 370.0 443.2 C371.2 443.9 372.3 444.5 373.5 445.2 C374.7 445.9 375.9 446.6 377.0 447.2 C378.1 447.8 379.2 448.4 380.4 449.0 C381.5 449.6 382.7 450.2 383.9 450.7 C385.1 451.2 386.2 451.7 387.4 452.2 C388.6 452.7 389.8 453.2 390.9 453.6 C392.0 454.0 393.1 454.4 394.3 454.8 C395.5 455.2 396.6 455.5 397.8 455.8 C399.0 456.1 400.0 456.3 401.3 456.5 C402.6 456.7 404.2 457.0 405.7 457.2 C407.1 457.4 408.6 457.5 410.0 457.5 C411.4 457.5 413.3 457.3 414.0 457.3 L430.4 457.25 L430.6 458.3 L631.8 458.35 L632.2 457.45 L781.2 457.4" fill="none" stroke="#3a9a44" stroke-width="0.55" stroke-linejoin="round"/><rect x="12" y="456.6" width="14.3" height="1.1" fill="#0a1a0a"/><path d="M669.7 457.9 L675 457.0 L690 456.7 L700 456.3 L730 456.0 L750 456.2 L765 456.5 L772 457.2 L772 457.9 Z" fill="#0a160a"/><rect x="541.5" y="456.9" width="4.5" height="1.0" fill="#222"/><line x1="202.5" y1="401" x2="202.5" y2="457.7" stroke="#b0283c" stroke-width="0.5"/><line x1="291.5" y1="348.6" x2="291.5" y2="457.7" stroke="#e4501a" stroke-width="0.55"/><line x1="704.5" y1="456.3" x2="704.5" y2="458.4" stroke="#c02020" stroke-width="0.5"/><line x1="735.5" y1="456.3" x2="735.5" y2="458.4" stroke="#c02020" stroke-width="0.5"/><line x1="768.5" y1="456.3" x2="768.5" y2="458.4" stroke="#c02020" stroke-width="0.5"/></g><path d="M11.5 459.1 L11.5 161.5 L781.2 161.5 L781.2 459.1" fill="none" stroke="#c3c7ce" stroke-width="0.6"/></svg>
<div style="left:46px;top:646px;width:48px;height:24px;overflow:hidden;"><div class="t ui" style="right:31px;top:4.2px;font-size:17.8px;color:#3a3a3a">200</div></div>
<div style="left:786.4px;top:1802.4px;width:42.8px;height:22.4px;background:#e6e800;border:1.8px solid #a8b800;box-sizing:border-box;"></div>
<div style="left:1145.6px;top:1802.4px;width:42px;height:22.4px;background:#e6e800;border:1.8px solid #a8b800;box-sizing:border-box;"></div>
<div style="left:2788px;top:1795.2px;width:59.2px;height:23.2px;background:#e6e800;border:1.8px solid #a8b800;box-sizing:border-box;"></div>
<div style="left:2911.6px;top:1793.2px;width:58.4px;height:23.6px;background:#e6e800;border:1.8px solid #a8b800;box-sizing:border-box;"></div>
<div style="left:3044px;top:1796.4px;width:59.2px;height:22.8px;background:#e6e800;border:1.8px solid #a8b800;box-sizing:border-box;"></div>
<div style="left:3130.4px;top:644px;width:25.6px;height:1193.2px;background:#e6edf5;"></div>
<div style="left:3134.4px;top:648px;width:17.2px;height:1188px;background:linear-gradient(90deg,#ffa42a 0%,#ff8a0c 40%,#f06c00 100%);border-left:1.8px solid #8c8c8c;border-top:1.8px solid #9a9a9a;box-sizing:border-box;"></div>
<div style="left:37.2px;top:1836.4px;width:3125.2px;height:47.2px;background:#ffffe1;"></div>
<div style="left:32px;top:1883.4px;width:3136px;height:4.2px;background:#285577;"></div>
<div style="left:3132.8px;top:1836px;width:29.6px;height:10.4px;background:#eef4fb;"></div>
<div style="left:2424.8px;top:1846.8px;width:116px;height:20px;background:linear-gradient(180deg,#f6f4e0 0%,#e0dfd0 40%,#b4b4a6 78%,#85857a 100%);border-radius:5.2px;border-bottom:2px solid #6f6f66;box-sizing:border-box;"></div>
<div style="left:2552.4px;top:1846.8px;width:70.8px;height:20px;background:linear-gradient(180deg,#f6f4e0 0%,#e0dfd0 40%,#b4b4a6 78%,#85857a 100%);border-radius:5.2px;border-bottom:2px solid #6f6f66;box-sizing:border-box;"></div>
<div style="left:2635.6px;top:1846px;width:78.8px;height:22px;background:linear-gradient(180deg,#ffedb8 0%,#ffd474 50%,#ffc24a 100%);border:3.2px solid #ff9a0c;border-radius:7.2px;box-sizing:border-box;"></div>
<div style="left:2724px;top:1846px;width:90px;height:22px;background:linear-gradient(180deg,#ffedb8 0%,#ffd474 50%,#ffc24a 100%);border:3.2px solid #ff9a0c;border-radius:7.2px;box-sizing:border-box;"></div>
<div style="left:2918px;top:1844px;width:52px;height:23.2px;background:#fffdf3;border:2px solid #bddcd6;box-sizing:border-box;"></div>
<div style="left:3002.8px;top:1846.8px;width:121.2px;height:20px;background:linear-gradient(180deg,#f6f4e0 0%,#e0dfd0 40%,#b4b4a6 78%,#85857a 100%);border-radius:5.2px;border-bottom:2px solid #6f6f66;box-sizing:border-box;"></div>
<div style="left:32px;top:1887.2px;width:3136px;height:36.2px;background:#000;"></div>
<div style="left:32px;top:1887.2px;width:25.6px;height:36.2px;background:#285577;"></div>
<div style="left:2187.2px;top:1893.6px;width:1.8px;height:23.2px;background:#777;"></div>
<div style="left:2268.8px;top:1893.6px;width:1.8px;height:23.2px;background:#777;"></div>
<div style="left:2509.6px;top:1893.6px;width:1.8px;height:23.2px;background:#777;"></div>
<div style="left:2624.8px;top:1893.6px;width:1.8px;height:23.2px;background:#777;"></div>
<div style="left:2719.2px;top:1893.6px;width:1.8px;height:23.2px;background:#777;"></div>
<div style="left:2771.2px;top:1893.6px;width:1.8px;height:23.2px;background:#777;"></div>
<div style="left:2881.6px;top:1893.6px;width:1.8px;height:23.2px;background:#777;"></div>
<div style="left:2971.2px;top:1893.6px;width:1.8px;height:23.2px;background:#777;"></div>
</div>
<div id="txt">
<div class="t gtk" style="top:46.36px;font-size:19.2px;color:#8e908f;letter-spacing:-0.06px;left:47.6px;">Machine</div>
<div class="t gtk" style="top:46.36px;font-size:19.2px;color:#8e908f;letter-spacing:0.14px;left:156.8px;">View</div>
<div class="t mono" style="top:84.6px;font-size:16.24px;color:#f4f7fa;left:39px;-webkit-text-stroke:0.2px currentColor;">Theremino Spectrometer 窗向小機板 V0.2</div>
<div class="t lib" style="top:120.12px;font-size:17.8px;color:#2a2a2a;letter-spacing:-1.43px;left:63.2px;">File</div>
<div class="t lib" style="top:120.12px;font-size:17.8px;color:#2a2a2a;letter-spacing:-0.49px;left:124.4px;">Tools</div>
<div class="t lib" style="top:120.12px;font-size:17.8px;color:#2a2a2a;letter-spacing:-0.11px;left:199.6px;">Language</div>
<div class="t lib" style="top:120.12px;font-size:17.8px;color:#2a2a2a;letter-spacing:-0.87px;left:312.4px;">Help</div>
<div class="t lib" style="top:120.12px;font-size:17.8px;color:#2a2a2a;letter-spacing:-0.23px;left:381.2px;">About</div>
<div class="t lib" style="top:159.32px;font-size:17.8px;color:#262626;letter-spacing:-0px;left:91.6px;">Video controls</div>
<div class="t lib" style="top:159.32px;font-size:17.8px;color:#262626;letter-spacing:-0.43px;left:263px;">Spectrum image</div>
<div class="t lib" style="top:159.32px;font-size:17.8px;color:#262626;letter-spacing:-0.61px;left:452px;">Camera image</div>
<div class="t lib" style="top:159.32px;font-size:17.8px;color:#262626;letter-spacing:-0.4px;left:627px;">Total image</div>
<div class="t lib" style="top:159.32px;font-size:17.8px;color:#262626;letter-spacing:-0.4px;left:776.4px;">Write DataFile</div>
<div class="t lib" style="top:160.2px;font-size:16px;color:#222;letter-spacing:-1.08px;left:3098px;">Run</div>
<div class="t ui" style="top:188.52px;font-size:18px;color:#4343b8;left:60.4px;">Video Input Device</div>
<div class="t ui" style="top:317.32px;font-size:18px;color:#4343b8;left:60.4px;">Save Image</div>
<div class="t ui" style="top:496.52px;font-size:18px;color:#4343b8;left:60.4px;">Sync and integration</div>
<div class="t ui" style="top:188.52px;font-size:18px;color:#4343b8;left:556.4px;">Input</div>
<div class="t ui" style="top:227.56px;font-size:18.4px;color:#222;letter-spacing:0.25px;left:71.2px;">8 USB 2.0 Camera: USB-ZH</div>
<div class="t ui" style="top:266.72px;font-size:18px;color:#4040c4;left:91.72px;">1920 x</div>
<div class="t ui" style="top:266.72px;font-size:18px;color:#4040c4;left:198.04px;">0 fps</div>
<div class="t ui" style="top:266.72px;font-size:18px;color:#4040c4;left:275.8px;">11 mS</div>
<div class="t ui" style="top:348.52px;font-size:18px;color:#454545;left:76px;">Name</div>
<div class="t ui" style="top:338.92px;font-size:18px;color:#454545;left:331.2px;">JPEG quality</div>
<div class="t ui" style="top:339.16px;font-size:18.8px;color:#222;left:461.84px;">100</div>
<div class="t ui" style="top:374.32px;font-size:18px;color:#222;left:193.32px;">0_08</div>
<div class="t ui" style="top:373.56px;font-size:18.4px;color:#454545;left:376px;">.</div>
<div class="t ui" style="top:374.56px;font-size:18.4px;color:#222;left:402.4px;">JPG</div>
<div class="t ui" style="top:410.12px;font-size:18px;color:#454545;letter-spacing:0.32px;left:76px;">Path for images and the DataFile</div>
<div class="t ui" style="top:432.12px;font-size:18px;color:#333;letter-spacing:0.55px;left:172px;">C:\users\user\Documents\</div>
<div class="t ui" style="top:530.84px;font-size:18.2px;color:#454545;left:118.84px;">Slot Run</div>
<div class="t ui" style="top:530.84px;font-size:18.8px;color:#222;left:224.24px;">-1</div>
<div class="t ui" style="top:564.44px;font-size:18.2px;color:#454545;left:112.36px;">Slot Stop</div>
<div class="t ui" style="top:564.44px;font-size:18.8px;color:#222;left:224.24px;">-1</div>
<div class="t ui" style="top:596.44px;font-size:18.2px;color:#454545;left:75.24px;">Slot WriteFile</div>
<div class="t ui" style="top:596.44px;font-size:18.8px;color:#222;left:224.24px;">-1</div>
<div class="t ui" style="top:524.12px;font-size:18px;color:#454545;left:332.76px;">Rising speed</div>
<div class="t ui" style="top:524.16px;font-size:18.8px;color:#222;left:473.84px;">30</div>
<div class="t ui" style="top:555.72px;font-size:18px;color:#454545;left:329.92px;">Falling speed</div>
<div class="t ui" style="top:555.76px;font-size:18.8px;color:#222;left:473.84px;">30</div>
<div class="t ui" style="top:596.92px;font-size:18px;color:#222;left:307.48px;">Reset spectrum data</div>
<div class="t ui" style="top:239.32px;font-size:18px;color:#454545;left:560px;">Flip</div>
<div class="t ui" style="top:344.52px;font-size:18px;color:#454545;left:560.4px;">Size Y</div>
<div class="t ui" style="top:371.56px;font-size:18.4px;color:#222;left:584.16px;">9</div>
<div class="t ui" style="top:434.12px;font-size:18px;color:#454545;left:560.4px;">Start Y</div>
<div class="t ui" style="top:459.36px;font-size:18.4px;color:#222;left:578.28px;">44</div>
<div class="t ui" style="top:602.92px;font-size:18px;color:#454545;left:636.4px;">Start X</div>
<div class="t ui" style="top:603.96px;font-size:18.4px;color:#222;left:732.16px;">0</div>
<div class="t ui" style="top:605.72px;font-size:18px;color:#454545;left:3012px;">End X</div>
<div class="t ui" style="top:603.76px;font-size:18.4px;color:#222;left:3084.44px;">100</div>
<div class="t ui" style="top:651.04px;font-size:17.8px;color:#3a3a3a;left:332px;">300</div>
<div class="t ui" style="top:651.04px;font-size:17.8px;color:#3a3a3a;left:635px;">400</div>
<div class="t ui" style="top:651.04px;font-size:17.8px;color:#3a3a3a;left:938px;">500</div>
<div class="t ui" style="top:651.04px;font-size:17.8px;color:#3a3a3a;left:1241px;">600</div>
<div class="t ui" style="top:651.04px;font-size:17.8px;color:#3a3a3a;left:1544px;">700</div>
<div class="t ui" style="top:651.04px;font-size:17.8px;color:#3a3a3a;left:1847px;">800</div>
<div class="t ui" style="top:651.04px;font-size:17.8px;color:#3a3a3a;left:2150px;">900</div>
<div class="t ui" style="top:651.04px;font-size:17.8px;color:#3a3a3a;left:2453px;">1000</div>
<div class="t ui" style="top:651.04px;font-size:17.8px;color:#3a3a3a;left:2756px;">1100</div>
<div class="t ui" style="top:651.04px;font-size:17.8px;color:#3a3a3a;left:3059px;">1200</div>
<div class="t ui" style="top:1804.76px;font-size:18.4px;color:#5c6a10;left:790.24px;-webkit-text-stroke:0;">452</div>
<div class="t ui" style="top:1804.76px;font-size:18.4px;color:#5c6a10;left:1149.04px;-webkit-text-stroke:0;">574</div>
<div class="t ui" style="top:1797.96px;font-size:18.4px;color:#5c6a10;left:2794.2px;-webkit-text-stroke:0;">1117</div>
<div class="t ui" style="top:1796.16px;font-size:18.4px;color:#5c6a10;left:2917.4px;-webkit-text-stroke:0;">1159</div>
<div class="t ui" style="top:1798.96px;font-size:18.4px;color:#5c6a10;left:3050.2px;-webkit-text-stroke:0;">1203</div>
<div class="t ui" style="top:1851.56px;font-size:18.4px;color:#454545;letter-spacing:0.8px;left:52.8px;white-space:pre;">Curs: 31%  953 nm</div>
<div class="t ui" style="top:1847.72px;font-size:18px;color:#222;left:2437.48px;">Reference</div>
<div class="t ui" style="top:1847.72px;font-size:18px;color:#222;left:2567.96px;">Dips</div>
<div class="t ui" style="top:1847.92px;font-size:18px;color:#222;left:2648.96px;">Peaks</div>
<div class="t ui" style="top:1847.92px;font-size:18px;color:#222;left:2740.8px;">Colors</div>
<div class="t ui" style="top:1848.52px;font-size:17.2px;color:#454545;left:2861.2px;">Filter</div>
<div class="t ui" style="top:1846.96px;font-size:18.4px;color:#222;left:2932.28px;">30</div>
<div class="t ui" style="top:1847.72px;font-size:18px;color:#222;left:3018.2px;">Trim scale</div>
<div class="t mono" style="top:1897px;font-size:16.24px;color:#fff;left:40px;">1</div>
<div class="t mono" style="top:1897.4px;font-size:16.24px;color:#00d400;left:1956px;white-space:pre;">fec0::5054:ff:fe12:3456</div>
<div class="t mono" style="top:1897.4px;font-size:16.24px;color:#e01010;left:2196px;white-space:pre;">W: down</div>
<div class="t mono" style="top:1897.4px;font-size:16.24px;color:#00d400;left:2277.6px;white-space:pre;">E: 10.0.2.15 (0 Mbit/s)</div>
<div class="t mono" style="top:1897.4px;font-size:16.24px;color:#f0f0f0;left:2519.2px;white-space:pre;">No battery</div>
<div class="t mono" style="top:1897.4px;font-size:16.24px;color:#f0f0f0;left:2633.6px;white-space:pre;">86.4 GiB</div>
<div class="t mono" style="top:1897.4px;font-size:16.24px;color:#f0f0f0;left:2728px;white-space:pre;">2.12</div>
<div class="t mono" style="top:1897.4px;font-size:16.24px;color:#f0f0f0;left:2780px;white-space:pre;">407.0 MiB</div>
<div class="t mono" style="top:1897.4px;font-size:16.24px;color:#f0f0f0;left:2898.4px;white-space:pre;">3.2 GiB</div>
<div class="t mono" style="top:1897.4px;font-size:16.24px;color:#f0f0f0;left:2980px;white-space:pre;">2025-04-05 11:13:20</div>
</div>
</body></html>
